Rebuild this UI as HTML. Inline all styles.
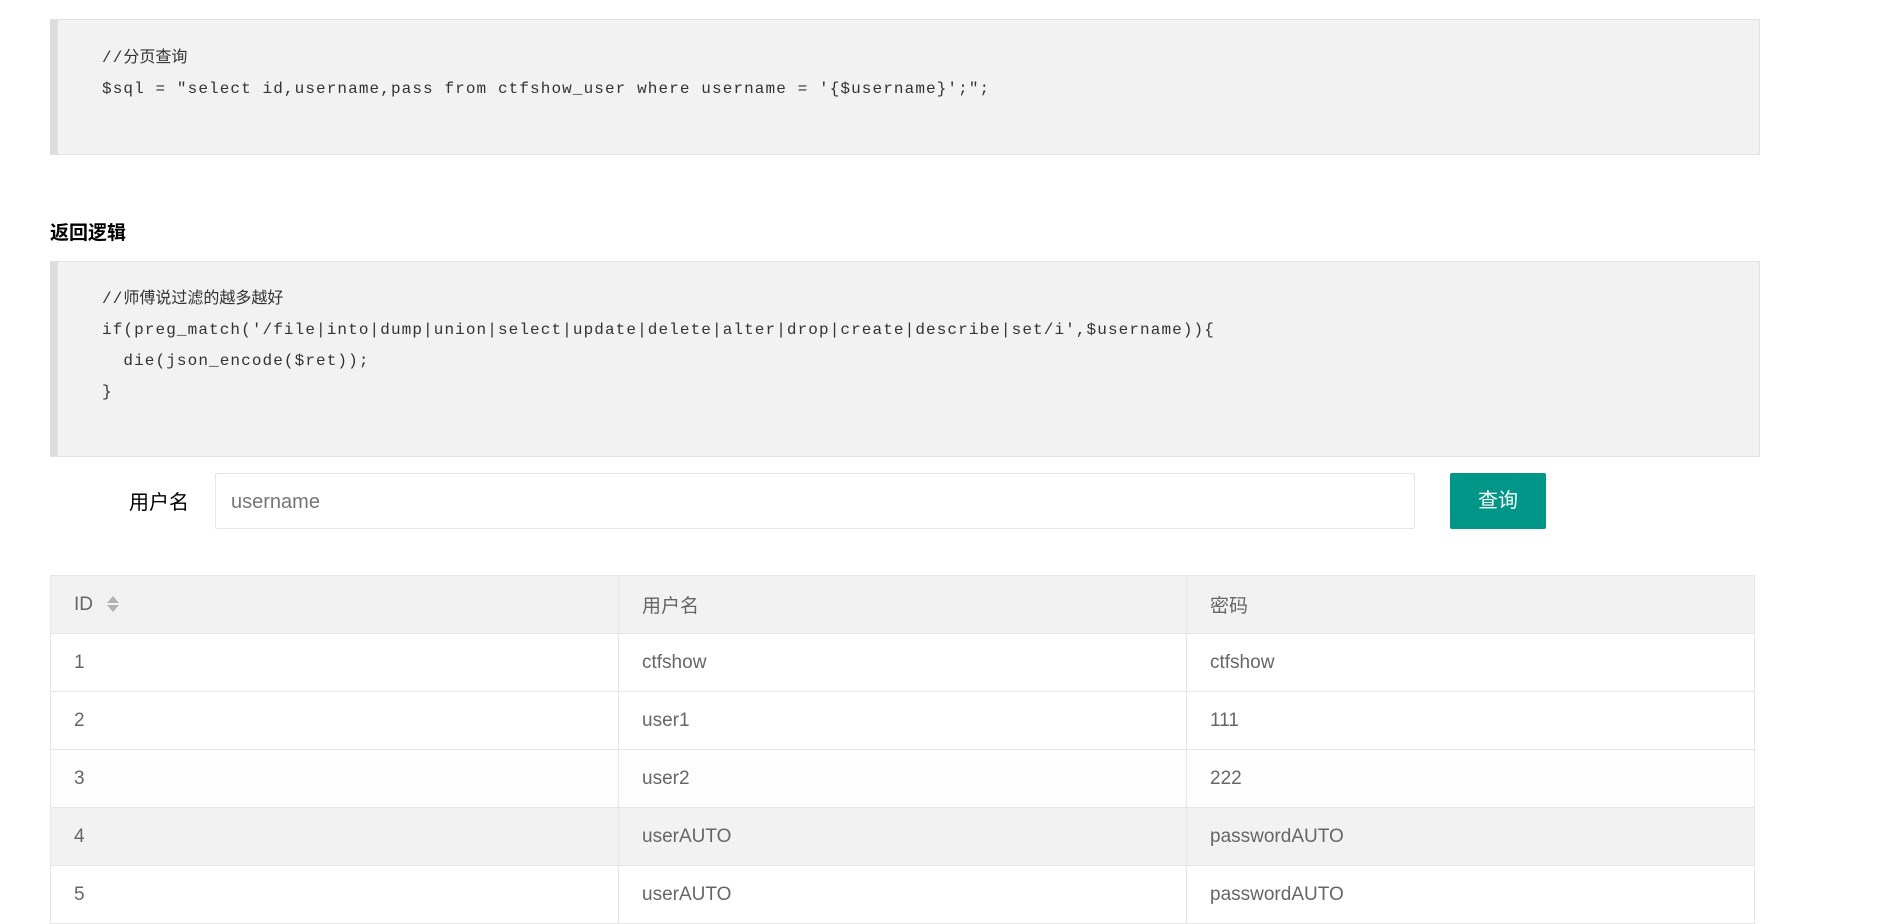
<!DOCTYPE html>
<html><head><meta charset="utf-8"><style>
body{margin:0;width:1877px;height:899px;overflow:hidden;background:#fff;font-family:"Liberation Sans","Noto Sans CJK SC",sans-serif;position:relative}
.code{position:absolute;left:50px;width:1701px;background:#f2f2f2;border:1px solid #e2e2e2;border-left:8px solid #ddd;font-family:"Liberation Mono","Noto Sans CJK SC",monospace;font-size:16px;letter-spacing:1.1px;color:#333;}
.code div{position:absolute;left:44px;white-space:pre;line-height:31px}
.cn{letter-spacing:0}
h3{position:absolute;left:50px;top:218px;margin:0;font-size:19px;font-weight:bold;color:#000}
.lab{position:absolute;left:129px;top:486px;font-size:20px;color:#000}
.inp{position:absolute;left:215px;top:473px;width:1198px;height:54px;border:1px solid #e6e6e6;border-radius:2px}
.inp span{position:absolute;left:15px;top:17px;font-size:20px;color:#757575}
.btn{position:absolute;left:1450px;top:473px;width:96px;height:56px;background:#009688;color:#fff;font-size:20px;text-align:center;line-height:56px;border-radius:2px}
table{position:absolute;left:50px;top:575px;width:1705px;border-collapse:collapse;font-size:19px;color:#666;border-right:1px solid #e6e6e6}
td,th{border:1px solid #e6e6e6;height:57px;padding:0 0 0 23px;text-align:left;font-weight:normal;width:544px}
th{background:#f2f2f2;height:57px}
.s{display:inline-block;vertical-align:middle;margin-left:14px;position:relative;width:12px;height:20px}
.s:before{content:"";position:absolute;top:2px;left:0;border:6px solid transparent;border-bottom:7px solid #b2b2b2;border-top:0}
.s:after{content:"";position:absolute;top:11px;left:0;border:6px solid transparent;border-top:7px solid #b2b2b2;border-bottom:0}
</style></head><body>
<div class="code" style="top:19px;height:134px">
<div style="top:23px"><span>//</span><span class="cn">分页查询</span></div>
<div style="top:54px">$sql = "select id,username,pass from ctfshow_user where username = '{$username}';";</div>
</div>
<h3>返回逻辑</h3>
<div class="code" style="top:261px;height:194px">
<div style="top:22px"><span>//</span><span class="cn">师傅说过滤的越多越好</span></div>
<div style="top:53px">if(preg_match('/file|into|dump|union|select|update|delete|alter|drop|create|describe|set/i',$username)){</div>
<div style="top:84px">  die(json_encode($ret));</div>
<div style="top:115px">}</div>
</div>
<div class="lab">用户名</div>
<div class="inp"><span>username</span></div>
<div class="btn">查询</div>
<table>
<tr><th>ID<span class="s"></span></th><th>用户名</th><th>密码</th></tr>
<tr><td>1</td><td>ctfshow</td><td>ctfshow</td></tr>
<tr><td>2</td><td>user1</td><td>111</td></tr>
<tr style="background:#fdfdfd"><td>3</td><td>user2</td><td>222</td></tr>
<tr style="background:#f2f2f2"><td>4</td><td>userAUTO</td><td>passwordAUTO</td></tr>
<tr><td>5</td><td>userAUTO</td><td>passwordAUTO</td></tr>
</table>
</body></html>
